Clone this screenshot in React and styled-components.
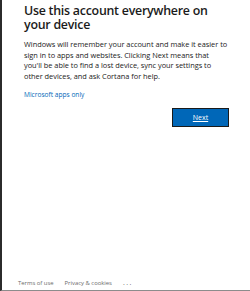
import styled, { createGlobalStyle } from 'styled-components'

const GlobalStyle = createGlobalStyle`
  html, body {
    margin: 0;
    padding: 0;
    background: #ffffff;
  }
  * {
    box-sizing: border-box;
  }
`

const Frame = styled.div`
  width: 250px;
  height: 291px;
  border-left: 2px solid #2b2b2b;
  border-bottom: 1px solid #8c8c8c;
  background: #ffffff;
  display: flex;
  flex-direction: column;
  font-family: "Open Sans", "Noto Sans", sans-serif;
  color: #1b1b1b;
`

const Content = styled.div`
  padding: 4px 20px 0 22px;
  display: flex;
  flex-direction: column;
`

const Title = styled.h1`
  margin: 0;
  font-size: 12.4px;
  line-height: 13.5px;
  font-weight: 600;
  letter-spacing: -0.25px;
`

const Description = styled.p`
  margin: 8px 0 0;
  font-size: 7.4px;
  line-height: 10.7px;
  font-weight: 400;
  letter-spacing: -0.02px;
  white-space: nowrap;
`

const Link = styled.a`
  margin-top: 8px;
  font-size: 6.6px;
  line-height: 10px;
  color: #0067b8;
  text-decoration: none;
  cursor: pointer;
`

const Actions = styled.div`
  display: flex;
  justify-content: flex-end;
  margin-top: 8px;
  padding-right: 1px;
`

const NextButton = styled.button`
  width: 57px;
  height: 19px;
  padding: 0;
  background: #0067b8;
  border: 1px solid #1a1a1a;
  color: #ffffff;
  font-family: inherit;
  font-size: 7px;
  text-decoration: underline;
  cursor: pointer;
`

const Footer = styled.div`
  margin-top: auto;
  padding: 0 0 2px 16px;
  display: flex;
  align-items: center;
  gap: 11px;
  font-size: 5.9px;
  line-height: 10px;
  color: #6b6b6b;
`

const FooterLink = styled.span`
  cursor: pointer;
`

const More = styled.span`
  letter-spacing: 1.5px;
  font-size: 7px;
`

export default function App() {
  return (
    <>
      <GlobalStyle />
      <Frame>
        <Content>
          <Title>Use this account everywhere on your device</Title>
          <Description>
            Windows will remember your account and make it easier to
            <br />
            sign in to apps and websites. Clicking Next means that
            <br />
            you'll be able to find a lost device, sync your settings to
            <br />
            other devices, and ask Cortana for help.
          </Description>
          <Link>Microsoft apps only</Link>
          <Actions>
            <NextButton>Next</NextButton>
          </Actions>
        </Content>
        <Footer>
          <FooterLink>Terms of use</FooterLink>
          <FooterLink>Privacy &amp; cookies</FooterLink>
          <More>...</More>
        </Footer>
      </Frame>
    </>
  )
}
